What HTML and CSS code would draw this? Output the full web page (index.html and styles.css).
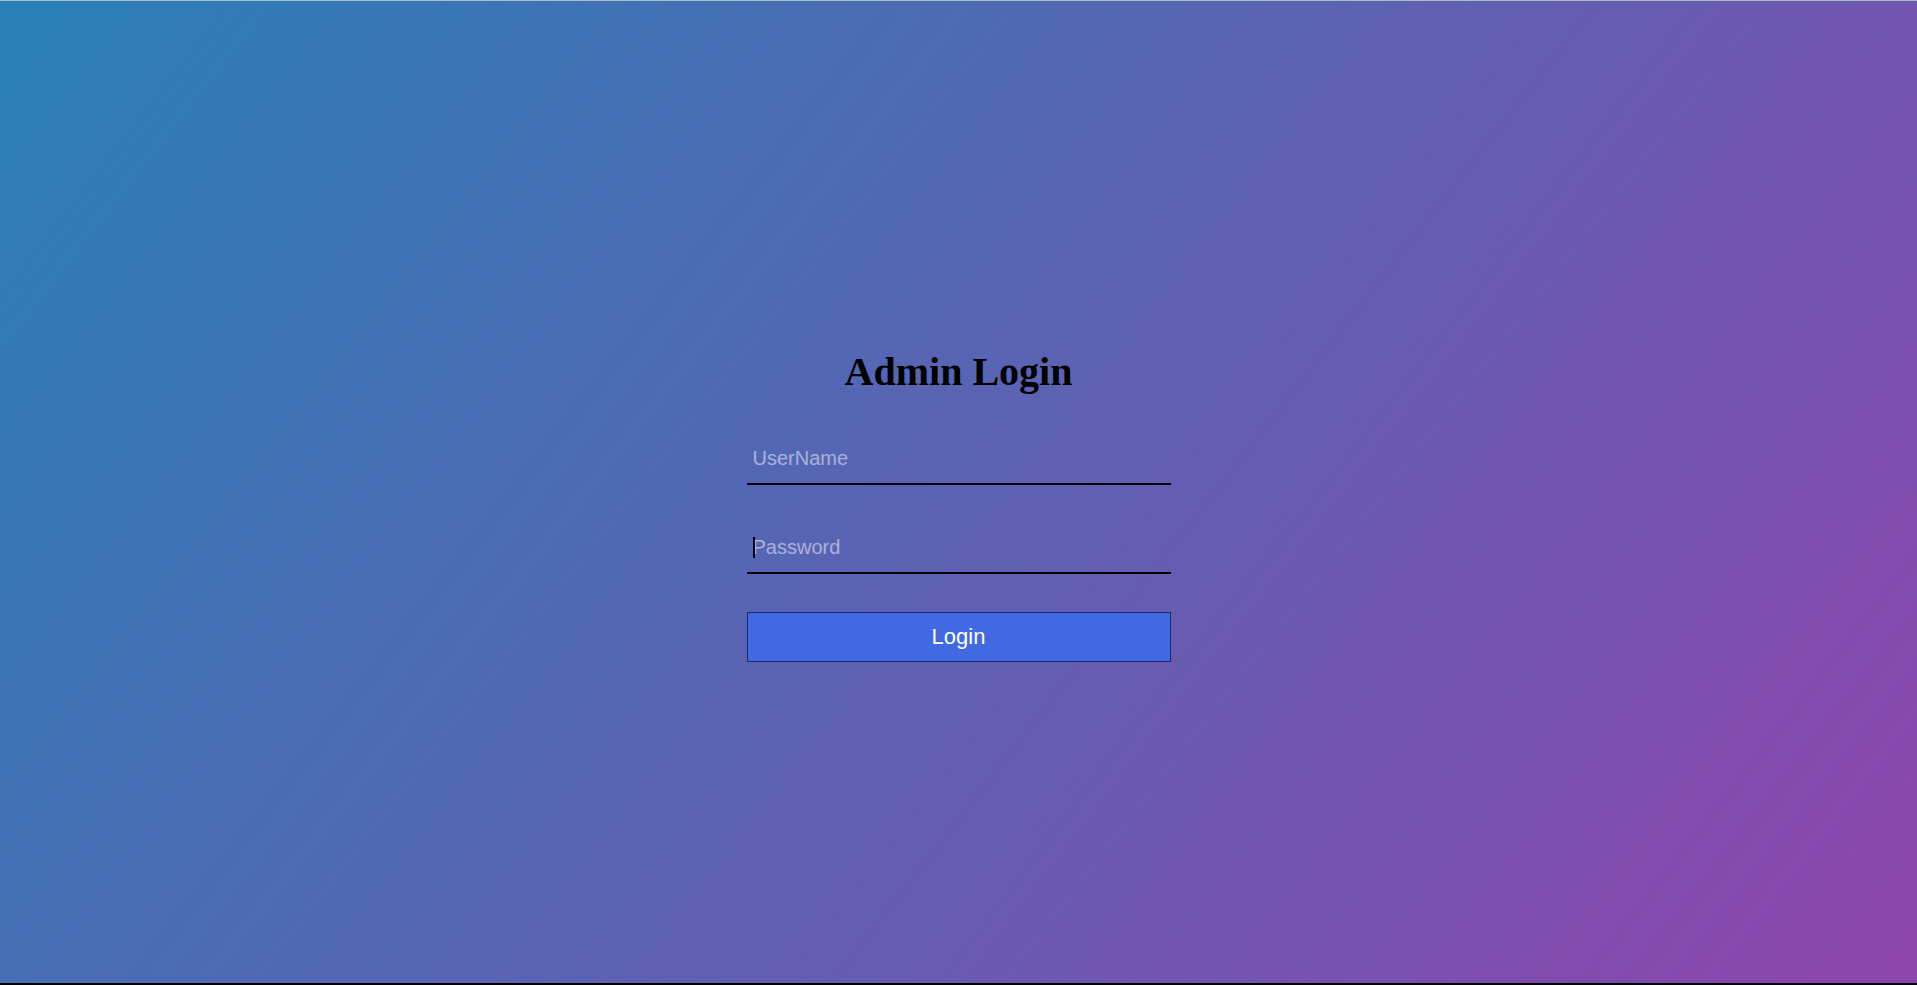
FILE: index.html
```html
<!DOCTYPE html>
<html lang="en">
<head>
<meta charset="utf-8">
<title>Admin Login</title>
<link rel="stylesheet" href="styles.css">
</head>
<body>
<div class="page">
  <form class="login" onsubmit="return false">
    <h1 class="title">Admin Login</h1>
    <input class="field field-user" type="text" placeholder="UserName">
    <div class="field-wrap">
      <input class="field field-pass" type="password" placeholder="Password">
      <span class="caret"></span>
    </div>
    <button class="btn" type="submit">Login</button>
  </form>
</div>
</body>
</html>
```

FILE: styles.css
```css
html {
  margin: 0;
  padding: 0;
  background: #000;
}
body {
  margin: 0;
  padding: 0;
  border-top: 1px solid #a6bec6;
}
.page {
  height: 982px;
  background: linear-gradient(128deg, #2980b9 0%, #8e44ad 100%);
  display: flex;
  align-items: center;
  justify-content: center;
}
.login {
  width: 424px;
  display: flex;
  flex-direction: column;
  align-items: stretch;
}
.title {
  font-family: "Liberation Serif", "Times New Roman", serif;
  font-weight: bold;
  font-size: 40px;
  line-height: 46px;
  text-align: center;
  color: #000;
  margin: 28px 0 40px;
}
.field-wrap {
  position: relative;
  display: flex;
  flex-direction: column;
}
.field {
  box-sizing: border-box;
  height: 50px;
  margin: 0 0 39px;
  padding: 12px 6px 13px;
  border: none;
  border-bottom: 2px solid #000;
  background: transparent;
  font-family: "Liberation Sans", Arial, sans-serif;
  font-size: 20px;
  color: #000;
  outline: none;
}
.field-pass {
  margin-bottom: 38px;
}
.field::placeholder {
  color: rgba(255, 255, 255, 0.5);
}
.caret {
  position: absolute;
  left: 6px;
  top: 13px;
  width: 2px;
  height: 21px;
  background: #000;
}
.btn {
  box-sizing: border-box;
  height: 50px;
  background: #4169e1;
  border: 1px solid #1b2a66;
  color: #fff;
  font-family: "Liberation Sans", Arial, sans-serif;
  font-size: 22px;
  margin: 0 0 2px;
  padding: 0;
  cursor: pointer;
}
```
